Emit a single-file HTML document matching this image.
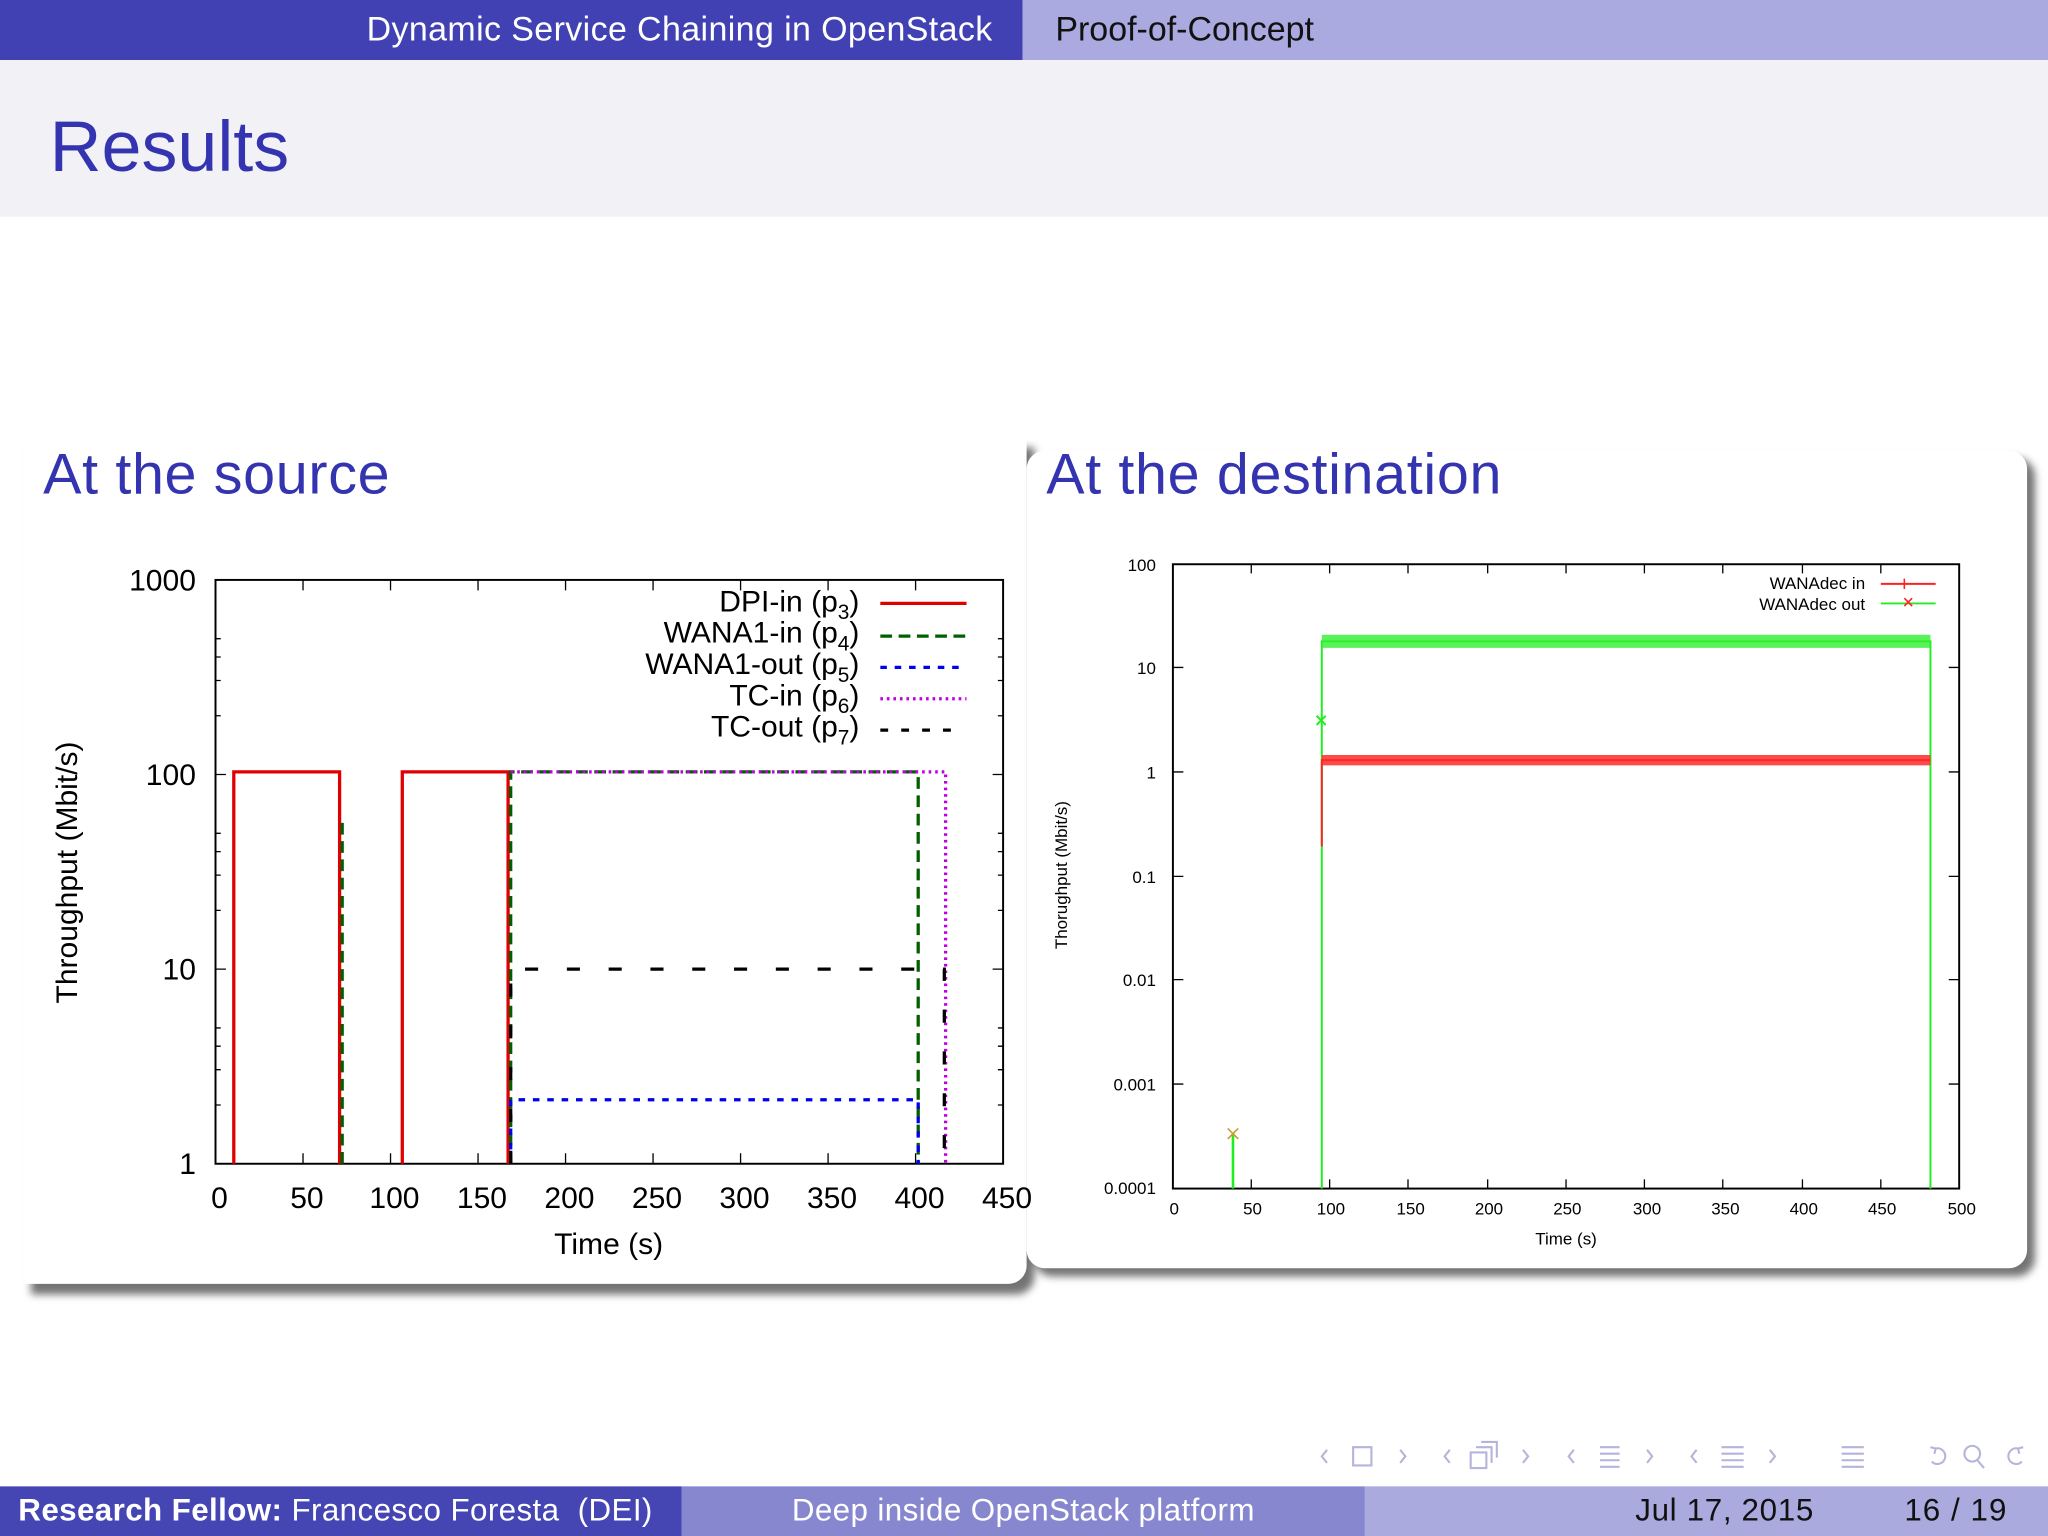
<!DOCTYPE html>
<html><head><meta charset="utf-8"><style>
html,body{margin:0;padding:0;background:#fff;overflow:hidden}
#w{position:absolute;left:0;top:0;width:1568px;height:1176px;transform:scale(1.306122);transform-origin:0 0;font-family:"Liberation Sans",sans-serif;background:#fff}
.a{position:absolute;white-space:nowrap}
.card{position:absolute;background:#fff;border-radius:14px;box-shadow:6px 8px 6px rgba(0,0,0,0.55)}
</style></head><body><div id="w">
<div class="a" style="left:0;top:0;width:783px;height:46px;background:#4141b3"></div>
<div class="a" style="left:783px;top:0;width:785px;height:46px;background:#aaaae0"></div>
<div class="a" style="left:0;top:7px;width:760px;text-align:right;color:#fff;font-size:26px;letter-spacing:0.3px">Dynamic Service Chaining in OpenStack</div>
<div class="a" style="left:808px;top:7px;color:#111;font-size:26px">Proof-of-Concept</div>
<div class="a" style="left:0;top:46px;width:1568px;height:120px;background:#f2f1f5"></div>
<div class="a" style="left:38px;top:80px;color:#3434b0;font-size:55px">Results</div>

<div class="card" style="left:18px;top:335px;width:768px;height:648px;border-radius:0 0 14px 0"></div>
<div class="card" style="left:786px;top:345px;width:766px;height:626px;box-shadow:6px 6px 6px rgba(0,0,0,0.55)"></div>

<div class="a" style="left:33px;top:339px;color:#3434b0;font-size:44px;letter-spacing:0.5px;background:#fff;padding-right:4px">At the source</div>
<div class="a" style="left:801px;top:339px;color:#3434b0;font-size:44px;letter-spacing:0.5px">At the destination</div>

<svg class="a" style="left:0;top:0" width="1568" height="1176" font-family="Liberation Sans,sans-serif">
<g stroke="#000" stroke-width="1.5" fill="none">
<rect x="165" y="444" width="603" height="447"/>
</g>
<g stroke="#000" stroke-width="1">
<path d="M165 593h8M760 593h8M165 742h8M760 742h8M232 891v-8M299 891v-8M366 891v-8M433 891v-8M500 891v-8M567 891v-8M634 891v-8M701 891v-8M232 444v8M299 444v8M366 444v8M433 444v8M500 444v8M567 444v8M634 444v8M701 444v8
M165 548h4M165 521h4M165 503h4M165 489h4M165 697h4M165 670h4M165 652h4M165 638h4M165 846h4M165 819h4M165 801h4M165 787h4
M764 548h4M764 521h4M764 503h4M764 489h4M764 697h4M764 670h4M764 652h4M764 638h4M764 846h4M764 819h4M764 801h4M764 787h4"/>
</g>
<g font-size="23" fill="#000" text-anchor="end">
<text x="150" y="452">1000</text><text x="150" y="601">100</text><text x="150" y="750">10</text><text x="150" y="899">1</text>
</g>
<g font-size="23" fill="#000" text-anchor="middle">
<text x="168" y="925">0</text><text x="235" y="925">50</text><text x="302" y="925">100</text><text x="369" y="925">150</text><text x="436" y="925">200</text><text x="503" y="925">250</text><text x="570" y="925">300</text><text x="637" y="925">350</text><text x="704" y="925">400</text><text x="771" y="925">450</text>
<text x="466" y="960">Time (s)</text>
<text transform="translate(59,668) rotate(-90)">Throughput (Mbit/s)</text>
</g>
<g font-size="23" fill="#000" text-anchor="end">
<text x="658" y="468">DPI-in (p<tspan font-size="16" dy="6">3</tspan><tspan dy="-6">)</tspan></text>
<text x="658" y="492">WANA1-in (p<tspan font-size="16" dy="6">4</tspan><tspan dy="-6">)</tspan></text>
<text x="658" y="516">WANA1-out (p<tspan font-size="16" dy="6">5</tspan><tspan dy="-6">)</tspan></text>
<text x="658" y="540">TC-in (p<tspan font-size="16" dy="6">6</tspan><tspan dy="-6">)</tspan></text>
<text x="658" y="564">TC-out (p<tspan font-size="16" dy="6">7</tspan><tspan dy="-6">)</tspan></text>
</g>
<g fill="none" stroke-width="2.5">
<path d="M674 462h66" stroke="#e00000"/>
<path d="M674 487h66" stroke="#006000" stroke-dasharray="9,5"/>
<path d="M674 511h66" stroke="#0000ee" stroke-dasharray="5,6"/>
<path d="M674 535h66" stroke="#c000e0" stroke-dasharray="2,3"/>
<path d="M674 559h56" stroke="#000" stroke-dasharray="6,10"/>
<path d="M179 891V591h81V891M308 891V591h81V891" stroke="#e00000"/>
<path d="M262 891V630" stroke="#006000" stroke-dasharray="9,5"/>
<path d="M391 891V591h312V891" stroke="#006000" stroke-dasharray="9,5"/>
<path d="M391 891V842h312V891" stroke="#0000ee" stroke-dasharray="5,6"/>
<path d="M391 591h333V891" stroke="#c000e0" stroke-dasharray="2,3"/>
<path d="M391 891V742h332V891" stroke="#000" stroke-dasharray="10,22"/>
</g>

<rect x="898" y="432" width="602" height="478" fill="none" stroke="#000" stroke-width="1.5"/>
<g stroke="#000" stroke-width="1">
<path d="M898 511h8M1492 511h8M898 591h8M1492 591h8M898 671h8M1492 671h8M898 750h8M1492 750h8M898 830h8M1492 830h8
M958 910v-7M1018 910v-7M1078 910v-7M1139 910v-7M1199 910v-7M1259 910v-7M1319 910v-7M1380 910v-7M1440 910v-7
M958 432v7M1018 432v7M1078 432v7M1139 432v7M1199 432v7M1259 432v7M1319 432v7M1380 432v7M1440 432v7"/>
</g>
<g font-size="13" fill="#000" text-anchor="end">
<text x="885" y="437">100</text><text x="885" y="516">10</text><text x="885" y="596">1</text><text x="885" y="676">0.1</text><text x="885" y="755">0.01</text><text x="885" y="835">0.001</text><text x="885" y="914">0.0001</text>
<text x="1428" y="451">WANAdec in</text><text x="1428" y="467">WANAdec out</text>
</g>
<g font-size="13" fill="#000" text-anchor="middle">
<text x="899" y="930">0</text><text x="959" y="930">50</text><text x="1019" y="930">100</text><text x="1080" y="930">150</text><text x="1140" y="930">200</text><text x="1200" y="930">250</text><text x="1261" y="930">300</text><text x="1321" y="930">350</text><text x="1381" y="930">400</text><text x="1441" y="930">450</text><text x="1502" y="930">500</text>
<text x="1199" y="953">Time (s)</text>
<text transform="translate(817,670) rotate(-90)">Thorughput (Mbit/s)</text>
</g>
<g fill="none">
<path d="M1440 447h42" stroke="#ff2020" stroke-width="1.5"/>
<path d="M1440 462h42" stroke="#20ee20" stroke-width="1.5"/>
<path d="M1458 443v8M1458 458l6 6M1464 458l-6 6" stroke="#ff2020" stroke-width="1.2"/>
<path d="M1012 910V491h466V910" stroke="#20ee20" stroke-width="1.5"/>
<path d="M1012 491h466" stroke="#30f030" stroke-width="10" stroke-opacity="0.8"/>
<path d="M1012 648V582h466" stroke="#ff2020" stroke-width="1.5"/>
<path d="M1012 582h466" stroke="#ff2a2a" stroke-width="8" stroke-opacity="0.85"/>
<path d="M944 910V868" stroke="#20ee20" stroke-width="2"/>
<path d="M940 864l8 8M948 864l-8 8" stroke="#cc9930" stroke-width="1.2"/>
<path d="M1008 548l7 7M1015 548l-7 7" stroke="#20ee20" stroke-width="1.5"/>
</g>

<g fill="none" stroke="#b4b4dc" stroke-width="1.6">
<path d="M1016 1110l-4 5 4 5M1072 1110l4 5-4 5M1036 1108h14v14h-14z"/>
<path d="M1110 1110l-4 5 4 5M1166 1110l4 5-4 5M1126 1112h12v12h-12zM1130 1108h12v12M1134 1104h12v12"/>
<path d="M1205 1110l-4 5 4 5M1261 1110l4 5-4 5M1225 1108h15M1225 1113h15M1225 1118h15M1225 1123h15"/>
<path d="M1299 1110l-4 5 4 5M1355 1110l4 5-4 5M1318 1108h17M1318 1113h17M1318 1118h17M1318 1123h17"/>
<path d="M1410 1108h17M1410 1113h17M1410 1118h17M1410 1123h17"/>
<path d="M1482 1109a6 6 0 1 1 -3 10M1478 1108l4 1-1 4"/>
<circle cx="1510" cy="1113" r="6"/><path d="M1514 1118l5 6"/>
<path d="M1545 1109a6 6 0 1 0 3 10M1549 1108l-4 1 1 4"/>
</g>
</svg>

<div class="a" style="left:0;top:1138px;width:522px;height:38px;background:#4545b4"></div>
<div class="a" style="left:522px;top:1138px;width:523px;height:38px;background:#8787d0"></div>
<div class="a" style="left:1045px;top:1138px;width:523px;height:38px;background:#aaaadf"></div>
<div class="a" style="left:14px;top:1143px;color:#fff;font-size:24px;letter-spacing:0.3px"><b>Research Fellow:</b> Francesco Foresta &nbsp;(DEI)</div>
<div class="a" style="left:522px;top:1143px;width:523px;text-align:center;color:#fff;font-size:24px;letter-spacing:0.3px">Deep inside OpenStack platform</div>
<div class="a" style="left:1252px;top:1143px;color:#111;font-size:24px;letter-spacing:0.5px">Jul 17, 2015</div>
<div class="a" style="left:1458px;top:1143px;color:#111;font-size:24px;letter-spacing:0.8px">16 / 19</div>
</div></body></html>
